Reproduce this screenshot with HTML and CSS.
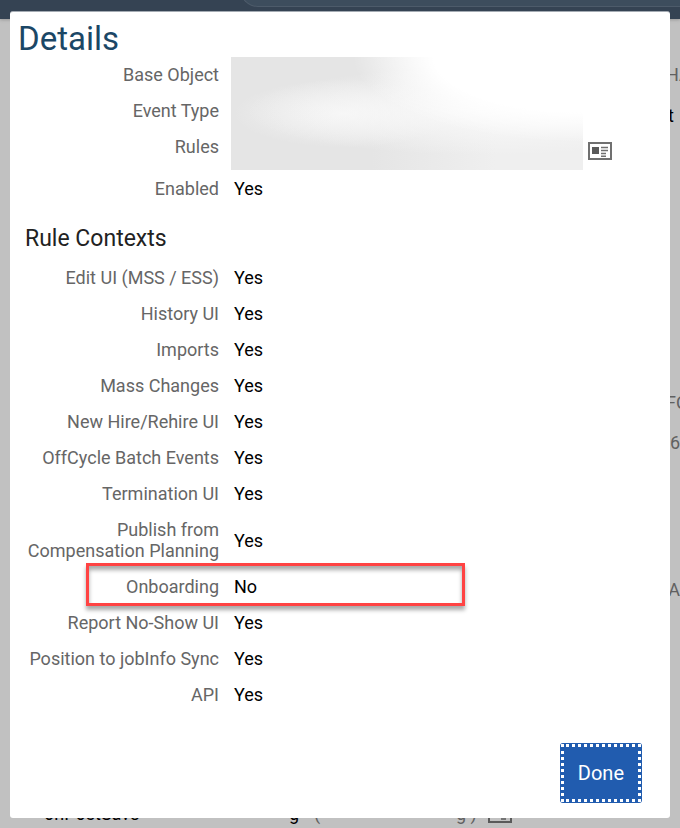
FILE: index.html
```html
<!DOCTYPE html>
<html lang="en">

<head>
  <meta charset="UTF-8">
  <meta name="viewport" content="width=device-width, initial-scale=1.0">
  <title>Details</title>
  <link rel="stylesheet" href="styles.css">
</head>

<body>
  <!-- page under the dialog -->
  <div class="page" aria-hidden="true">
    <header class="shell">
      <div class="search"></div>
    </header>
    <div class="side">
      <span class="side-label">HA</span>
      <span class="side-value">t</span>
      <span class="side-label side-group">FO</span>
      <span class="side-label side-end">6</span>
      <span class="side-label side-end side-last">TA</span>
    </div>
    <div class="under-row">
      <span class="under-name">onPostSave</span>
      <span class="under-rule">g</span>
      <span class="under-open">(</span>
      <span class="under-close">g )</span>
      <svg class="card-icon" width="24" height="20" viewBox="0 0 24 20">
        <path d="M1 2h22v16H1z" fill="none" stroke="#5a5a5a" stroke-width="2" />
        <path d="M13 15h5" stroke="#5a5a5a" stroke-width="1.5" />
      </svg>
    </div>
  </div>

  <div class="overlay">
    <section class="dialog" role="dialog" aria-labelledby="title">
      <h1 id="title">Details</h1>

      <dl class="summary">
        <dt>Base Object</dt>
        <dt>Event Type</dt>
        <dt class="rules">Rules</dt>
        <dd class="hidden-values">
          <div class="redacted"></div>
          <button class="card-button" type="button" aria-label="Show rule">
            <svg class="card-icon" width="24" height="20" viewBox="0 0 24 20">
              <path d="M1 2h22v16H1z" fill="none" stroke="#707070" stroke-width="2" />
              <path d="M4 6h7v7H4z" fill="#5a5a5a" />
              <path d="M13 6.5h7M13 9.5h7M13 12.5h5M13 15.2h5" stroke="#707070" stroke-width="1.5" />
            </svg>
          </button>
        </dd>
      </dl>
      <dl class="fields">
        <div class="row"><dt>Enabled</dt><dd>Yes</dd></div>
      </dl>

      <h2>Rule Contexts</h2>
      <dl class="fields">
        <div class="row"><dt>Edit UI (MSS / ESS)</dt><dd>Yes</dd></div>
        <div class="row"><dt>History UI</dt><dd>Yes</dd></div>
        <div class="row"><dt>Imports</dt><dd>Yes</dd></div>
        <div class="row"><dt>Mass Changes</dt><dd>Yes</dd></div>
        <div class="row"><dt>New Hire/Rehire UI</dt><dd>Yes</dd></div>
        <div class="row"><dt>OffCycle Batch Events</dt><dd>Yes</dd></div>
        <div class="row"><dt>Termination UI</dt><dd>Yes</dd></div>
        <div class="row"><dt>Publish from<br>Compensation Planning</dt><dd>Yes</dd></div>
        <div class="row marked"><dt>Onboarding</dt><dd>No</dd></div>
        <div class="row"><dt>Report No-Show UI</dt><dd>Yes</dd></div>
        <div class="row"><dt>Position to jobInfo Sync</dt><dd>Yes</dd></div>
        <div class="row"><dt>API</dt><dd>Yes</dd></div>
      </dl>

      <footer class="actions">
        <button class="done" type="button"><span>Done</span></button>
      </footer>
    </section>
  </div>
</body>

</html>
```
FILE: styles.css
```css
*,
*::after {
  box-sizing: border-box;
}

body {
  margin: 0;
  min-height: 100vh;
  display: grid;
  background: #c1c1c1;
  color: #000;
  font: 18px/21px Roboto, "Liberation Sans", sans-serif;
}

/* page and dialog share the same cell */
.page,
.overlay {
  grid-area: 1 / 1;
  min-width: 0;
}

.page {
  display: flex;
  flex-direction: column;
  overflow: hidden;
}

.shell {
  height: 19px;
  padding-left: 240px;
  background: #354353;
  box-shadow: 0 1px 3px #999;
  overflow: hidden;
}

.search {
  height: 36px;
  margin-top: -29px;
  border: 1px solid #4d5b6a;
  border-right: 0;
  border-radius: 18px 0 0 18px;
  background: #3d4d5d;
}

.side {
  display: flex;
  flex-direction: column;
  align-self: flex-end;
  width: 14px;
  padding-top: 45px;
  white-space: nowrap;
}

.side-label {
  color: #606060;
}

.side-value {
  margin-top: 20px;
  padding-left: 2px;
}

.side-group {
  margin: 266px 0 19px;
}

.side-end {
  align-self: flex-end;
}

.side-last {
  margin-top: 126px;
}

.under-row {
  display: flex;
  align-items: flex-end;
  height: 24px;
  margin-top: auto;
  margin-bottom: 4px;
  padding-left: 44px;
}

.under-name {
  width: 245px;
}

.under-rule {
  width: 25px;
}

.under-open {
  width: 142px;
  color: #606060;
}

.under-close {
  width: 32px;
  color: #606060;
}

.overlay {
  display: flex;
  padding: 11px 10px 10px;
}

.dialog {
  flex: 1;
  display: flex;
  flex-direction: column;
  min-width: 0;
  border-top: 1px solid #a4abb3;
  border-radius: 3px;
  background: #fff;
}

h1 {
  margin: 0;
  padding: 9px 8px 0;
  color: #1b4766;
  font-size: 33px;
  font-weight: 400;
  line-height: 36px;
}

h2 {
  margin: 0;
  padding: 18px 15px 7px;
  color: #222;
  font-size: 23px;
  font-weight: 400;
  line-height: 28px;
}

dl,
dd {
  margin: 0;
}

dt {
  color: #666;
  text-align: right;
}

.summary {
  display: grid;
  grid-template-columns: 209px 1fr;
  column-gap: 12px;
}

.summary dt {
  padding: 7px 0 8px;
}

.summary .rules {
  padding-bottom: 14px;
}

.hidden-values {
  grid-area: 1 / 2 / 4 / 3;
  display: flex;
  align-items: flex-end;
  gap: 5px;
  padding-bottom: 1px;
}

.redacted {
  flex: 0 1 352px;
  align-self: stretch;
  background:
    radial-gradient(ellipse 230px 85px at 100% 0, #fff 65%, transparent),
    radial-gradient(ellipse 240px 44px at 72% 48%, #f9f9f9, transparent),
    radial-gradient(ellipse 110px 34px at 32% 50%, #f5f5f5, transparent),
    linear-gradient(90deg, #e5e5e5 40%, #efefef 75%);
}

.card-button {
  display: flex;
  margin-bottom: 9px;
  padding: 0;
  border: 0;
  background: none;
}

.row {
  display: flex;
  align-items: center;
  gap: 15px;
  padding: 7px 0 8px;
}

.row dt {
  width: 209px;
}

/* red frame round the row */
.marked {
  position: relative;
}

.marked::after {
  content: "";
  position: absolute;
  top: -6px;
  bottom: -1px;
  left: 76px;
  width: 379px;
  border: 3px solid #ff4343;
  box-shadow: 0 4px 4px #aaa, inset 0 4px 4px #aaa;
}

.actions {
  display: flex;
  justify-content: flex-end;
  margin-top: auto;
  padding: 15px 28px;
}

.done {
  padding: 1px;
  border: 0;
  border-radius: 3px;
  background: #215caf;
  color: #fff;
  font: 20px/24px Roboto, "Liberation Sans", sans-serif;
}

.done span {
  display: block;
  padding: 14px;
  border: 3px dotted #fff;
}
```
